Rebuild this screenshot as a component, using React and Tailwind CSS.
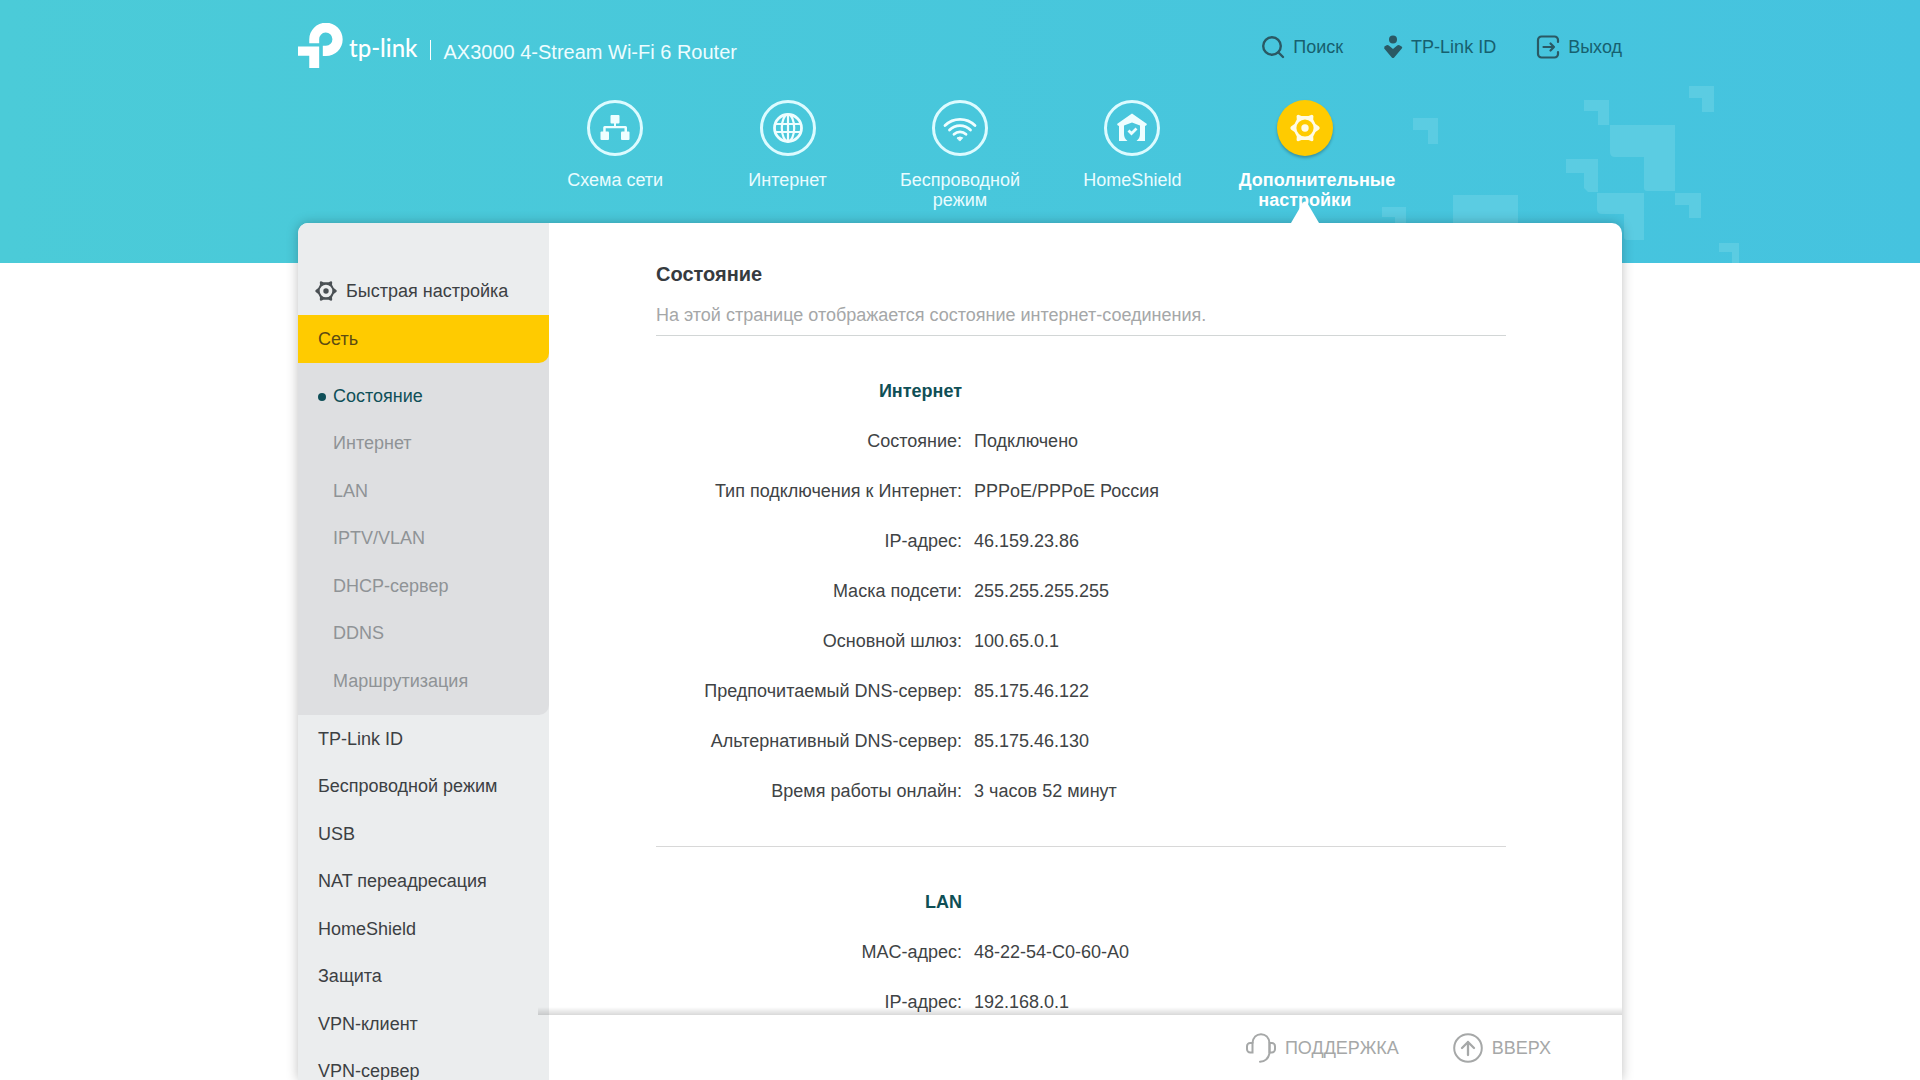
import React from "react";

const topTools = [
  { label: "Поиск", icon: SearchIcon },
  { label: "TP-Link ID", icon: PersonIcon },
  { label: "Выход", icon: ExitIcon },
];

const mainNav = [
  { label: "Схема сети", icon: NetworkIcon },
  { label: "Интернет", icon: GlobeIcon },
  { label: "Беспроводной режим", icon: WifiIcon },
  { label: "HomeShield", icon: HomeShieldIcon },
  { label: "Дополнительные настройки", icon: GearIcon, active: true },
];

const networkItems = ["Состояние", "Интернет", "LAN", "IPTV/VLAN", "DHCP-сервер", "DDNS", "Маршрутизация"];

const sideItems = [
  "TP-Link ID",
  "Беспроводной режим",
  "USB",
  "NAT переадресация",
  "HomeShield",
  "Защита",
  "VPN-клиент",
  "VPN-сервер",
];

const sections = [
  {
    title: "Интернет",
    rows: [
      ["Состояние:", "Подключено"],
      ["Тип подключения к Интернет:", "PPPoE/PPPoE Россия"],
      ["IP-адрес:", "46.159.23.86"],
      ["Маска подсети:", "255.255.255.255"],
      ["Основной шлюз:", "100.65.0.1"],
      ["Предпочитаемый DNS-сервер:", "85.175.46.122"],
      ["Альтернативный DNS-сервер:", "85.175.46.130"],
      ["Время работы онлайн:", "3 часов 52 минут"],
    ],
  },
  {
    title: "LAN",
    rows: [
      ["MAC-адрес:", "48-22-54-C0-60-A0"],
      ["IP-адрес:", "192.168.0.1"],
    ],
  },
];

function SearchIcon() {
  return (
    <svg viewBox="0 0 24 24" className="size-6" fill="none" stroke="currentColor" strokeWidth="2.4" strokeLinecap="round" aria-hidden="true">
      <circle cx="11" cy="11" r="8.8" />
      <path d="M17.5 17.5L22 22" />
    </svg>
  );
}

function PersonIcon() {
  return (
    <svg viewBox="0 0 20 24" className="h-6 w-5" fill="currentColor" aria-hidden="true">
      <circle cx="10" cy="4.6" r="4" />
      <path d="M1.4 12.4a2.4 2.4 0 0 1 0-1l2.2-1.2a2 2 0 0 1 2.2.4L10 14l4.200-3.400a2 2 0 0 1 2.200-.4l2.200 1.200a1.500 1.500 0 0 1 .2 2.200l-7.600 8.800a1.600 1.600 0 0 1-2.400 0L1.200 13.600a1.500 1.500 0 0 1 .2-1.200z" />
    </svg>
  );
}

function ExitIcon() {
  return (
    <svg viewBox="0 0 24 24" className="size-6" fill="none" stroke="currentColor" strokeWidth="2.2" strokeLinecap="round" strokeLinejoin="round" aria-hidden="true">
      <path d="M22 7V5a3.500 3.500 0 0 0-3.500-3.500H5.500A3.500 3.500 0 0 0 2 5v14a3.500 3.500 0 0 0 3.500 3.500h13A3.500 3.500 0 0 0 22 19v-2" />
      <path d="M7.500 12H18M14.500 8.500L18 12l-3.500 3.500" />
    </svg>
  );
}

function NetworkIcon() {
  return (
    <svg viewBox="0 0 30 30" className="size-[30px]" fill="currentColor" aria-hidden="true">
      <rect x="10.500" y="2" width="9" height="8.500" rx="1" />
      <rect x="0.500" y="18.500" width="8.500" height="8.500" rx="1" />
      <rect x="21" y="18.500" width="8.500" height="8.500" rx="1" />
      <path d="M14 10h2v3h9.500a1.500 1.500 0 0 1 1.500 1.500V19h-2.500v-3.700H5.700V19H3.200v-4.500A1.500 1.500 0 0 1 4.700 13H14z" />
    </svg>
  );
}

function GlobeIcon() {
  return (
    <svg viewBox="0 0 30 30" className="size-[30px]" fill="none" stroke="currentColor" strokeWidth="2.200" aria-hidden="true">
      <circle cx="15" cy="15" r="13.500" strokeWidth="2.800" />
      <ellipse cx="15" cy="15" rx="6.200" ry="13.500" />
      <path d="M15 1.500v27M2.500 11h25M2.500 19h25" />
    </svg>
  );
}

function WifiIcon() {
  return (
    <svg viewBox="0 0 34 30" className="h-[30px] w-[34px]" fill="none" stroke="currentColor" strokeWidth="2.800" strokeLinecap="round" aria-hidden="true">
      <path d="M2 12.500a21.500 21.500 0 0 1 30 0" />
      <path d="M6.500 17a15 15 0 0 1 21 0" />
      <path d="M11 21.300a8.700 8.700 0 0 1 12 0" />
      <path d="M14.300 24.800q2.700-1.800 5.400 0L17 27.800z" fill="currentColor" strokeWidth="1" strokeLinejoin="round" />
    </svg>
  );
}

function HomeShieldIcon() {
  return (
    <svg viewBox="0 0 30 30" className="size-[30px]" aria-hidden="true">
      <path
        fill="currentColor"
        fillRule="evenodd"
        d="M15 0.500L30 11l-1 1.700h-1V28h-8.500c2.300-2 3.500-4 3.500-7v-8.500L15 9.500l-8 3V21c0 3 1.200 5 3.500 7H2V12.700H1L0 11z"
      />
      <path d="M11.500 17.500l3 3 5-5" fill="none" stroke="currentColor" strokeWidth="2.800" />
    </svg>
  );
}

function GearIcon() {
  return (
    <svg viewBox="0 0 30 30" className="size-full" fill="currentColor" aria-hidden="true">
      <path
        fillRule="evenodd"
        d="M0.400 15a2 2 0 0 1 .6-1.400L4.500 11 6.800 6.500 6.600 3.600A1.700 1.700 0 0 1 8.300 1.700L11.500 3h7l3.200-1.300a1.700 1.700 0 0 1 1.700 1.900L23.200 6.500 25.500 11l3.500 2.600a2 2 0 0 1 0 2.800L25.500 19l-2.300 4.500.2 2.900a1.700 1.700 0 0 1-1.700 1.900L18.500 27h-7l-3.200 1.300a1.700 1.700 0 0 1-1.700-1.900l.2-2.900L4.500 19 1 16.400A2 2 0 0 1 .4 15zM15 6.400a8.600 8.600 0 1 0 0 17.200 8.600 8.600 0 0 0 0-17.200z"
      />
      <circle cx="15" cy="15" r="3.700" />
    </svg>
  );
}

function HeadsetIcon() {
  return (
    <svg viewBox="0 0 30 30" className="size-[30px]" fill="none" stroke="currentColor" strokeWidth="2" strokeLinecap="round" aria-hidden="true">
      <path d="M6.500 10C7 4.500 10.500 1.200 15 1.200S23 4.500 23.500 10v10.500c-1.200 5-4.500 8-9.500 8.300" />
      <path d="M6.500 10v9.500H4.200A3.200 3.200 0 0 1 1 16.300v-3.100A3.200 3.200 0 0 1 4.200 10z" />
      <path d="M23.500 10v9.500h2.300a3.200 3.200 0 0 0 3.200-3.200v-3.100a3.200 3.200 0 0 0-3.200-3.200z" />
    </svg>
  );
}

function UpIcon() {
  return (
    <svg viewBox="0 0 30 30" className="size-[30px]" fill="none" stroke="currentColor" strokeWidth="2" strokeLinecap="round" strokeLinejoin="round" aria-hidden="true">
      <circle cx="15" cy="15" r="13.800" />
      <path d="M15 22V9M9 15l6-6 6 6" strokeWidth="2.300" />
    </svg>
  );
}

function Logo() {
  return (
    <a href="#" className="flex items-center text-white" aria-label="tp-link">
      <svg viewBox="0 0 136 136" className="size-[45px]" fill="currentColor" aria-hidden="true">
        <path d="M34 61V50a50.500 50.500 0 1 1 50.500 50H75V69h9.500A20 20 0 1 0 64 50v11z" />
        <path d="M0 71h64v65H34V99H0z" />
      </svg>
      <span className="ml-[6px] pt-1 font-['Lato'] text-[24px] leading-[30px] font-medium">tp-link</span>
    </a>
  );
}

/* Pale corner shapes scattered over the right end of the banner */
function BannerPattern() {
  return (
    <svg viewBox="0 0 380 200" className="absolute right-[160px] bottom-0 h-[200px] w-[380px]" fill="#5bcce2" aria-hidden="true">
      <path d="M33 55h25v26H48V67H33z" />
      <path d="M204 37h25v25h-11V48h-14z" />
      <path d="M309 23h25v26h-12V35h-13z" />
      <path d="M230 62h65v66h-28q-3 0-3-3V94h-29q-5 0-5-5z" />
      <path d="M186 96h32v33h-10l-4-4v-15h-18z" />
      <path d="M217 130h47v47h-17q-3 0-3-3v-23h-22q-5 0-5-5z" />
      <path d="M295 130h26v25h-12v-13h-14z" />
      <path d="M339 180h20v20h-7v-11h-13z" />
      <path d="M73 132h65v68H73z" />
      <path d="M2 144h24v25H15v-15H2z" />
    </svg>
  );
}

function SideNav() {
  return (
    <nav className="w-[251px] shrink-0 overflow-y-auto bg-[#ebedee] pt-[44px] text-[18px] text-[#3c4043] [scrollbar-width:none]">
      <a href="#" className="flex h-12 items-center gap-[9px] pl-[17px]">
        <span className="size-[22px] text-[#4a5054]">
          <GearIcon />
        </span>
        Быстрая настройка
      </a>
      <div className="rounded-br-[10px] bg-[#dedfe1]">
        <a href="#" className="flex h-12 items-center rounded-br-[10px] bg-[#ffcb00] pl-5 text-[#5c4b12]">
          Сеть
        </a>
        <ul className="pt-[9px] pb-[10px]">
          {networkItems.map((item, i) => (
            <li key={item} className="odd:pt-px">
              <a
                href="#"
                className={
                  i === 0
                    ? "flex h-[47px] items-center gap-[7px] pl-5 text-[#0f4f58]"
                    : "flex h-[47px] items-center gap-[7px] pl-5 text-[#8f9396]"
                }
              >
                <span className={i === 0 ? "size-2 rounded-full bg-[#0f4f58]" : "size-2"} />
                {item}
              </a>
            </li>
          ))}
        </ul>
      </div>
      <ul>
        {sideItems.map((item) => (
          <li key={item} className="odd:pt-px">
            <a href="#" className="flex h-[47px] items-center pl-5">
              {item}
            </a>
          </li>
        ))}
      </ul>
    </nav>
  );
}

export default function App() {
  return (
    <div className="relative isolate flex h-screen flex-col overflow-hidden bg-white font-['Liberation_Sans',Arial,sans-serif]">
      <div className="absolute inset-x-0 top-0 -z-10 h-[263px] overflow-hidden bg-linear-to-r from-[#4bcbd8] to-[#45c3df]">
        <BannerPattern />
      </div>

      <div className="mx-auto flex min-h-0 w-full max-w-[1324px] flex-1 flex-col">
        <header className="flex h-[100px] shrink-0 items-start justify-between pt-[23px]">
          <div className="flex items-center">
            <Logo />
            <div className="mt-2 ml-[13px] flex items-center gap-[12px] text-[20px] leading-6 text-[#eefdff]">
              <span className="h-5 w-px bg-white" />
              <span className="pt-1">AX3000 4-Stream Wi-Fi 6 Router</span>
            </div>
          </div>
          <div className="flex items-center gap-[40px] text-[18px] leading-[48px] text-[#17606f]">
            {topTools.map(({ label, icon: Icon }) => (
              <button key={label} type="button" className="flex items-center gap-[8px]">
                <span className="text-[#2a5964]">
                  <Icon />
                </span>
                {label}
              </button>
            ))}
          </div>
        </header>

        <nav className="mx-auto grid h-[123px] w-full max-w-[862px] shrink-0 grid-cols-5">
          {mainNav.map(({ label, icon: Icon, active }) => (
            <a
              key={label}
              href="#"
              className={
                active
                  ? "relative flex flex-col items-center text-center text-[18px] leading-5 font-bold text-white"
                  : "relative flex flex-col items-center text-center text-[18px] leading-5 text-[#e9fcff]"
              }
            >
              <span
                className={
                  active
                    ? "flex size-[56px] items-center justify-center rounded-full bg-[#ffcb00] text-[#fffbe6] shadow-[0_2px_3px_rgba(0,0,0,0.25)]"
                    : "flex size-[56px] items-center justify-center rounded-full border-[3px] border-[#dcfbff] text-[#eefeff]"
                }
              >
                {active ? (
                  <span className="size-[30px]">
                    <Icon />
                  </span>
                ) : (
                  <Icon />
                )}
              </span>
              <span className="mt-[14px] w-[132px]">{label}</span>
              {active && (
                <svg viewBox="0 0 28 22" className="absolute bottom-0 h-[22px] w-7" fill="#fff" aria-hidden="true">
                  <path d="M0 22L12 1.500q2-2 4 0L28 22z" />
                </svg>
              )}
            </a>
          ))}
        </nav>

        <div className="flex min-h-0 flex-1 rounded-t-[10px] bg-white shadow-[0_0_12px_rgba(0,0,0,0.25)]">
          <div className="flex min-h-0 flex-1 overflow-hidden rounded-t-[10px]">
            <SideNav />
            <div className="flex min-w-0 flex-1 flex-col">
              <main className="min-h-0 flex-1 overflow-y-auto pt-[36px] pr-[116px] pl-[107px] text-[18px] text-[#404345] [scrollbar-width:none]">
                <h1 className="text-[20px] leading-[30px] font-bold text-[#363b3f]">Состояние</h1>
                <p className="mt-[14px] border-b border-[#d2d6d6] pb-2 leading-6 text-[#a5a7a8]">
                  На этой странице отображается состояние интернет-соединения.
                </p>
                {sections.map((section) => (
                  <section key={section.title} className="border-b border-[#d8d8d8] py-[30px] last:border-b-0">
                    <h2 className="w-[306px] text-right leading-[50px] font-bold text-[#0f4f56]">{section.title}</h2>
                    <dl>
                      {section.rows.map(([name, value]) => (
                        <div key={name} className="flex gap-[12px] leading-[50px]">
                          <dt className="w-[306px] shrink-0 text-right">{name}</dt>
                          <dd>{value}</dd>
                        </div>
                      ))}
                    </dl>
                  </section>
                ))}
              </main>
              <footer className="relative flex h-[65px] shrink-0 items-center justify-end gap-[54px] bg-white pt-px pr-[71px] text-[18px] text-[#a6a8a8]">
                <span className="absolute right-0 bottom-full -left-[11px] h-2 bg-linear-to-t from-black/15 to-transparent" />
                <button type="button" className="flex items-center gap-[9px]">
                  <HeadsetIcon />
                  ПОДДЕРЖКА
                </button>
                <button type="button" className="flex items-center gap-[9px]">
                  <UpIcon />
                  ВВЕРХ
                </button>
              </footer>
            </div>
          </div>
        </div>
      </div>
    </div>
  );
}
